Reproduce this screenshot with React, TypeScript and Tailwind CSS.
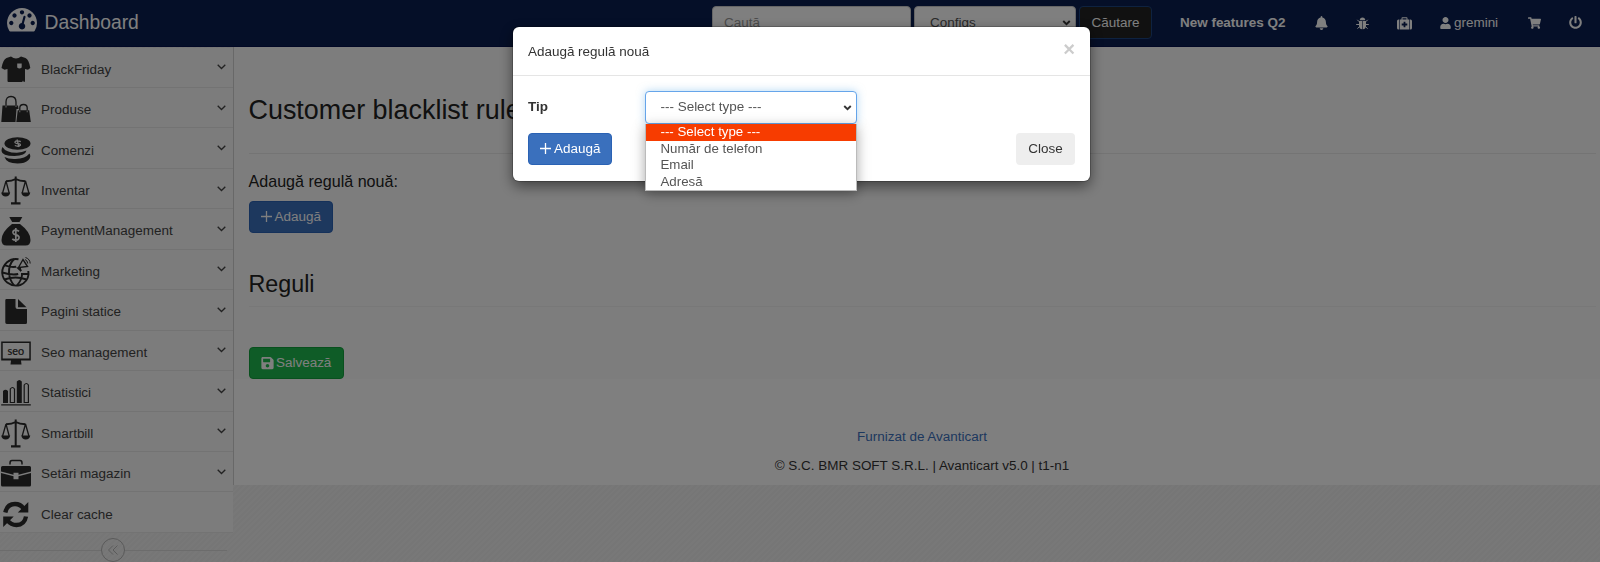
import { ReactNode, useState } from "react";
import {
  FaBell,
  FaPowerOff,
  FaSave,
  FaShoppingCart,
  FaUser,
} from "react-icons/fa";

type IconProps = {
  children: ReactNode;
};

function MenuIcon({ children }: IconProps) {
  return (
    <svg
      viewBox="0 0 30 30"
      className="w-[30px] h-[30px] shrink-0"
      fill="currentColor"
    >
      {children}
    </svg>
  );
}

function DashboardIcon() {
  return (
    <svg
      viewBox="0 256 1792 1408"
      className="w-[30px] h-[23.6px]"
      fill="currentColor"
    >
      <path d="M384 1152q0-53-37.5-90.5t-90.5-37.5-90.5 37.5-37.5 90.5 37.5 90.5 90.5 37.5 90.5-37.5 37.5-90.5zm192-448q0-53-37.5-90.5t-90.5-37.5-90.5 37.5-37.5 90.5 37.5 90.5 90.5 37.5 90.5-37.5 37.5-90.5zm428 481l101-382q6-26-7.5-48.5t-38.5-29.5-48 6.5-30 39.5l-101 382q-60 5-107 43.5t-63 98.5q-20 77 20 146t117 89 146-20 89-117q16-60-6-117t-72-91zm660-33q0-53-37.5-90.5t-90.5-37.5-90.5 37.5-37.5 90.5 37.5 90.5 90.5 37.5 90.5-37.5 37.5-90.5zm-640-640q0-53-37.5-90.5t-90.5-37.5-90.5 37.5-37.5 90.5 37.5 90.5 90.5 37.5 90.5-37.5 37.5-90.5zm448 192q0-53-37.5-90.5t-90.5-37.5-90.5 37.5-37.5 90.5 37.5 90.5 90.5 37.5 90.5-37.5 37.5-90.5zm320 448q0 261-141 483-19 29-54 29h-1402q-35 0-54-29-141-221-141-483 0-182 71-348t191-286 286-191 348-71 348 71 286 191 191 286 71 348z" />
    </svg>
  );
}

function BugIcon() {
  return (
    <svg
      viewBox="0 0 13 13"
      className="w-[13px] h-[13px] mr-7"
      fill="currentColor"
    >
      <path d="M3.700 3.200q.3-2.700 2.800-2.700t2.800 2.700zM3 4h3.200v8.300Q3 12 3 8.500zM6.800 4H10v4.500q0 3.500-3.200 3.800z" />
      <path
        d="M3.300 4.800 1.300 2.800M9.700 4.800l2-2M3.200 7.500H.2M9.800 7.500h3M3.500 9.500 1.500 11.700M9.500 9.500l2 2.200"
        stroke="currentColor"
      />
    </svg>
  );
}

function MedkitIcon() {
  return (
    <svg
      viewBox="0 0 15 13"
      className="w-[15px] h-[13px] mr-7"
      fill="currentColor"
      fillRule="evenodd"
    >
      <path d="M1.500 2.500H2.200V12.500H1.500Q0 12.500 0 11V4q0-1.500 1.500-1.500zM12.800 2.500h.7Q15 2.500 15 4v7q0 1.500-1.500 1.500H12.800z" />
      <path d="M2.800 2.500H4.500V1.200Q4.500.3 5.400.3h4.200q.9 0 .9.900v1.300h1.700v10H2.800zM5.500 2.500h4V1.300h-4zM6.600 4.700v1.900H4.700v1.800h1.900v1.900h1.800V8.400h1.900V6.600H8.400V4.700z" />
    </svg>
  );
}

function ShirtIcon() {
  return (
    <MenuIcon>
      <path d="M10 1.500Q15 5.500 20 1.500l4.500 1.500Q28 4.500 29.300 13l-2.300 1.700-3-.7V25.500q0 2-1.200 1.500l-.8-1.500-.8 1.500H7.500q-1 0-1-1V14l-3 .7L.5 13Q2 4.500 5.500 3z" />
      <path d="M16.200 8.500h4.500v4q-2.200 2-4.500 0z" fill="#f8f8f8" />
    </MenuIcon>
  );
}

function BagsIcon() {
  return (
    <MenuIcon>
      <path d="M1.500 10.500h15.500l.5 3.500h-2l-1 13H.3z" />
      <path d="M16.800 15.300h11.400l1.600 11.700H15.300z" />
      <path
        d="M5 12V7q0-5.500 5-5.500T15 7v5M18.800 17v-4q0-3.500 3.700-3.500t3.700 3.500v4"
        fill="none"
        stroke="currentColor"
        strokeWidth="1.300"
      />
      <path
        d="M5 10.500v2M15 10.500v1.500M18.800 15.500v1.800M26.200 15.500v1.800"
        stroke="#f8f8f8"
        strokeWidth=".8"
      />
    </MenuIcon>
  );
}

function CoinsIcon() {
  return (
    <MenuIcon>
      <ellipse cx="16.500" cy="7.500" rx="13" ry="6.200" />
      <path d="M1.500 11Q5 17 16 16.800q5-.2 9.500-2.300-1 5-12 5.500Q1 20 .5 15q0-2.500 1-4z" />
      <path d="M3.500 21q4 2.300 11 2 10-.5 14-5.500 2 3.500-1 6.500-3.500 3.500-11 3.500-11 0-13-6.500z" />
      <path
        d="M19.800 5.700q-3-1.500-5.200-.5-1.800 1.300.8 2.100 4.500.3 4 2-1.800 1.800-5.600.2M16 3.500l2 7.500"
        fill="none"
        stroke="#f8f8f8"
        strokeWidth="1.300"
      />
    </MenuIcon>
  );
}

function ScaleIcon() {
  return (
    <MenuIcon>
      <path
        d="M14.700.5V28M5 5.200Q11 5.200 14.700 3 18.500 5.200 24.500 5.200"
        fill="none"
        stroke="currentColor"
        strokeWidth="2"
      />
      <path
        d="M5 5 1.600 17M5 5l3.200 12M24.500 5l-3.300 12M24.500 5l3.400 12"
        stroke="currentColor"
        strokeWidth="1.300"
      />
      <path d="M.2 16.500h9q-.7 4-4.500 4t-4.500-4zM20.300 16.500h9q-.7 4-4.500 4t-4.500-4zM10 26.300h9.500v2.200H10z" />
    </MenuIcon>
  );
}

function MoneyBagIcon() {
  return (
    <MenuIcon>
      <path d="M8.300 0h13L18.500 5h-7.300z" />
      <path d="M11 7h8q10.500 8 10.500 16 0 5.500-5 5.500H5.500q-5 0-5-5.500Q.5 15 11 7z" />
      <path
        d="M18 14.300q-1.500-1.500-4-1.200-2.300.6-2 2.600.4 1.500 3 2.200 3.300.8 3 3-.4 2.300-3.200 2.300-2.200 0-3.500-1.400M14.800 11v14"
        fill="none"
        stroke="#f8f8f8"
        strokeWidth="1.700"
      />
    </MenuIcon>
  );
}

function GlobeIcon() {
  return (
    <MenuIcon>
      <g fill="none" stroke="currentColor" strokeWidth="1.900">
        <path d="M17.500 2.200Q11 1 6 5.200 1 10 1.200 16q.5 6 5 9.500 6 4.500 13 2.500 7.500-3 8.300-10.500l-.2-3.500" />
        <path d="M13 2Q7.500 8 8 16q.5 7 5 12.300M16 28.300q4.500-4.500 5.300-11.800M3.200 8.200q5 2.200 12 1.600M1.200 15.500q10 3 16 1.500M20 17h7M3.500 22.500q11-4 22 0" />
        <path d="M17.500 10.500 22 2.500l4.500 7-9 1 3 3.300" strokeWidth="1.400" />
        <path d="M24 2.500q2.500 1 2.700 4M24.500.5Q29 2 29.200 6.500" strokeWidth="1" />
      </g>
      <path d="M15 10.500h5v4.500z" />
    </MenuIcon>
  );
}

function PageIcon() {
  return (
    <MenuIcon>
      <path d="M5.500 2h9v8q0 2 2 2H26v13.500q0 1.500-1.500 1.500h-18Q4.300 27 4.300 25.500V3.300Q4.300 2 5.500 2z" />
      <path d="M17 2l8.500 8.300H17z" />
    </MenuIcon>
  );
}

function SeoIcon() {
  return (
    <MenuIcon>
      <path d="M.2 3.500h29.600v19H20l.5 4H9.500l.5-4H.2zM1.700 5v15.500h26.600V5z" />
      <text
        x="14.800"
        y="16.500"
        fontSize="10.800"
        textAnchor="middle"
        fontFamily="Lato, sans-serif"
        stroke="currentColor"
        strokeWidth=".2"
      >
        seo
      </text>
    </MenuIcon>
  );
}

function StatsIcon() {
  return (
    <MenuIcon>
      <path d="M2 25V13q2.500-2.500 5 0v12zM15.800 25V3.500q2.500-3 5 0V25zM.2 26.300h29.600v1.200H.2z" />
      <path
        d="M9.300 24.500V11q2.200-3 4.200 0v13.500zM23.200 24.500V7q2.200-3 4.200 0v17.500z"
        fill="none"
        stroke="currentColor"
        strokeWidth="1.200"
      />
    </MenuIcon>
  );
}

function BriefcaseIcon() {
  return (
    <MenuIcon>
      <path
        d="M9 5.500V4q0-2.500 2-2.500h8q2 0 2 2.500v1.500"
        fill="none"
        stroke="currentColor"
        strokeWidth="1.500"
      />
      <path d="M1.500 7h27q1.500 0 1.500 1.500V12.500l-12.500 3.300v-2h-5v2L0 12.500v-4Q0 7 1.500 7z" />
      <path d="M0 14l12.500 3.200v3h5v-3L30 14v12q0 1.500-1.500 1.500h-27Q0 27.500 0 26z" />
    </MenuIcon>
  );
}

function RefreshIcon() {
  return (
    <MenuIcon>
      <path
        d="M4.300 12.500Q6 4 14 4q5.500 0 8.500 4.500M25 16.500Q23.500 25 15.500 25q-5.500 0-9-4.500"
        fill="none"
        stroke="currentColor"
        strokeWidth="4.300"
      />
      <path d="M27.300 2v10.500H16.800zM2.200 27V16.500h10.500z" />
    </MenuIcon>
  );
}

const menuItems = [
  { label: "BlackFriday", icon: <ShirtIcon />, nested: true },
  { label: "Produse", icon: <BagsIcon />, nested: true },
  { label: "Comenzi", icon: <CoinsIcon />, nested: true },
  { label: "Inventar", icon: <ScaleIcon />, nested: true },
  { label: "PaymentManagement", icon: <MoneyBagIcon />, nested: true },
  { label: "Marketing", icon: <GlobeIcon />, nested: true },
  { label: "Pagini statice", icon: <PageIcon />, nested: true },
  { label: "Seo management", icon: <SeoIcon />, nested: true },
  { label: "Statistici", icon: <StatsIcon />, nested: true },
  { label: "Smartbill", icon: <ScaleIcon />, nested: true },
  { label: "Setări magazin", icon: <BriefcaseIcon />, nested: true },
  { label: "Clear cache", icon: <RefreshIcon />, nested: false },
];

const types = ["--- Select type ---", "Număr de telefon", "Email", "Adresă"];

function Chevron() {
  return (
    <svg
      viewBox="0 0 10 7"
      className="w-[9px] h-[6px]"
      fill="none"
      stroke="#333"
      strokeWidth="2.200"
    >
      <path d="M1.200 1.200 5 5l3.800-3.800" />
    </svg>
  );
}

function AddButton() {
  return (
    <button className="flex items-center w-[84px] h-8 pl-[11px] rounded-[4px] bg-[#3a70bd] border border-[#2a62b4] text-white">
      <svg
        viewBox="0 0 11 11"
        className="w-[11px] h-[11px] mr-[3px] -mt-px"
        stroke="currentColor"
        strokeWidth="1.300"
      >
        <path d="M5.500 0v11M0 5.500h11" />
      </svg>
      Adaugă
    </button>
  );
}

function Header() {
  return (
    <header className="flex items-start h-[47px] bg-[#0a1e50] border-b border-[#04104a] text-white">
      <div className="flex items-center gap-[7.500px] w-[712px] h-[46px] pl-[7px] text-[19.3px]">
        <span className="-mt-[6px]">
          <DashboardIcon />
        </span>
        <span>Dashboard</span>
      </div>
      <div className="flex gap-[3px] pt-[6px] w-[468px]">
        <input
          className="w-[199px] h-8 px-[11px] rounded-[4px] bg-white border border-[#ccc] placeholder:text-[#999]"
          type="text"
          placeholder="Caută"
        />
        <div className="flex items-center justify-between w-[162px] h-[33px] pl-[15px] pr-[4px] rounded-[4px] bg-white border border-[#ccc] text-[#555]">
          <span className="pt-px">Configs</span>
          <Chevron />
        </div>
        <button className="w-[73px] h-[33px] pt-px rounded-[4px] bg-[#222] border border-[#1d4480]">
          Căutare
        </button>
      </div>
      <nav className="flex items-center h-[46px] whitespace-nowrap">
        <b className="w-[135px]">New features Q2</b>
        <FaBell className="w-[13px] h-[14px] mr-7" />
        <BugIcon />
        <MedkitIcon />
        <FaUser className="w-[11px] h-[12px] mr-[3px]" />
        <span className="w-[74px]">gremini</span>
        <FaShoppingCart className="w-[13px] h-[12px] mr-7" />
        <FaPowerOff className="w-[13px] h-[13px] -mt-px" />
      </nav>
    </header>
  );
}

function Sidebar() {
  return (
    <aside className="w-[233px] shrink-0 pt-[0.5px]">
      <ul>
        {menuItems.map((item) => (
          <li
            key={item.label}
            className="flex items-center h-[40.46px] pl-[1px] pr-[7px] bg-[#f8f8f8] border-b border-[#e6e6e6] text-[#2a2a2a]"
          >
            <span className="mt-[5px]">{item.icon}</span>
            <span className="grow pl-[10px] pt-[5px] text-[#444]">
              {item.label}
            </span>
            {item.nested && (
              <svg
                viewBox="0 0 9 6"
                className="w-[9px] h-[6px]"
                fill="none"
                stroke="#444"
                strokeWidth="1.300"
              >
                <path d="M.7.7 4.500 4.500 8.300.7" />
              </svg>
            )}
          </li>
        ))}
      </ul>
      <div className="flex items-center h-[35px] w-[227px] text-[#b4b4b4]">
        <div className="w-[101px] h-px bg-[#d8d8d8]" />
        <div className="flex items-center justify-center w-6 h-6 rounded-full border border-[#b4b4b4]">
          <svg
            viewBox="0 0 10 10"
            className="w-[10px] h-[10px]"
            fill="none"
            stroke="currentColor"
          >
            <path d="M5 .5.500 5 5 9.500M9.500.5 5 5l4.500 4.500" />
          </svg>
        </div>
        <div className="grow h-px bg-[#d8d8d8]" />
      </div>
    </aside>
  );
}

function Content() {
  return (
    <main className="grow h-[438px] bg-white border-l border-[#d0d0d0]">
      <div className="h-[332px] pl-[14.500px] pr-1 bg-[#fbfbfb]">
        <h1 className="pt-[44px] h-[107px] text-[26.92px] leading-[38px] text-[#222] border-b border-[#e9e9e9]">
          Customer blacklist rules
        </h1>
        <p className="pt-[15px] h-[47px] text-[16.1px] leading-6 text-[#222]">
          Adaugă regulă nouă:
        </p>
        <AddButton />
        <h2 className="pt-[33px] h-[74px] text-[23.3px] leading-9 text-[#222] border-b border-[#f0f0f0]">
          Reguli
        </h2>
        <button className="flex items-center w-[95px] h-8 mt-[40px] pl-[11px] gap-[2.500px] rounded-[4px] bg-[#1fb94f] border border-[#12a03c] text-white">
          <FaSave className="w-[13px] h-[14px]" />
          Salvează
        </button>
      </div>
      <footer className="pt-[48px] pl-[10px] text-center text-[#333] leading-5">
        <p className="text-[#3a70bd]">Furnizat de Avanticart</p>
        <p className="pt-[9px]">
          © S.C. BMR SOFT S.R.L. | Avanticart v5.0 | t1-n1
        </p>
      </footer>
    </main>
  );
}

function TypeSelect() {
  const [selected, setSelected] = useState(types[0]);

  return (
    <div className="relative w-[212px]">
      <button className="flex items-center justify-between w-full h-[33px] pl-[15px] pr-[4px] rounded-[4px] bg-white border border-[#66a5ea] text-[#555] shadow-[0_0_8px_rgba(102,175,233,0.5)]">
        {selected}
        <Chevron />
      </button>
      <ul className="absolute top-[33px] left-0 w-[212px] h-[67px] bg-white border border-t-0 border-[#bbb] text-[13.3px] text-[#555] shadow-[0_3px_12px_rgba(0,0,0,0.35)]">
        {types.map((type) => (
          <li
            key={type}
            onClick={() => setSelected(type)}
            className={
              type === selected
                ? "pl-[15px] h-[16.600px] leading-[16px] bg-[#f73c00] text-white"
                : "pl-[15px] h-[16.600px] leading-[16px]"
            }
          >
            {type}
          </li>
        ))}
      </ul>
    </div>
  );
}

function RuleModal() {
  return (
    <div className="fixed inset-0 flex items-start justify-center bg-black/50 pt-[27px] pl-[3px]">
      <div className="w-[577px] h-[154px] rounded-[6px] bg-white shadow-[0_5px_14px_rgba(0,0,0,0.5),0_0_0_1px_rgba(0,0,0,0.2)] text-[#333]">
        <div className="flex justify-between h-[49px] px-[15px] border-b border-[#e5e5e5]">
          <h4 className="pt-[15px] leading-5">Adaugă regulă nouă</h4>
          <button className="h-[44px] text-[20.2px] font-bold text-[#ccc]">
            ×
          </button>
        </div>
        <div className="flex px-[15px] pt-[15px] h-[57px]">
          <label className="w-[116.500px] pt-[6px] leading-5 font-bold">
            Tip
          </label>
          <TypeSelect />
        </div>
        <div className="flex justify-between px-[15px]">
          <AddButton />
          <button className="w-[59px] h-8 rounded-[4px] bg-[#eee]">
            Close
          </button>
        </div>
      </div>
    </div>
  );
}

export default function App() {
  return (
    <div className="h-[562px] overflow-hidden font-['Liberation_Sans',sans-serif] text-[13.46px] bg-[repeating-linear-gradient(135deg,#f1f1f1_0_2px,#ededed_2px_4px)]">
      <Header />
      <div className="flex">
        <Sidebar />
        <Content />
      </div>
      <RuleModal />
    </div>
  );
}
